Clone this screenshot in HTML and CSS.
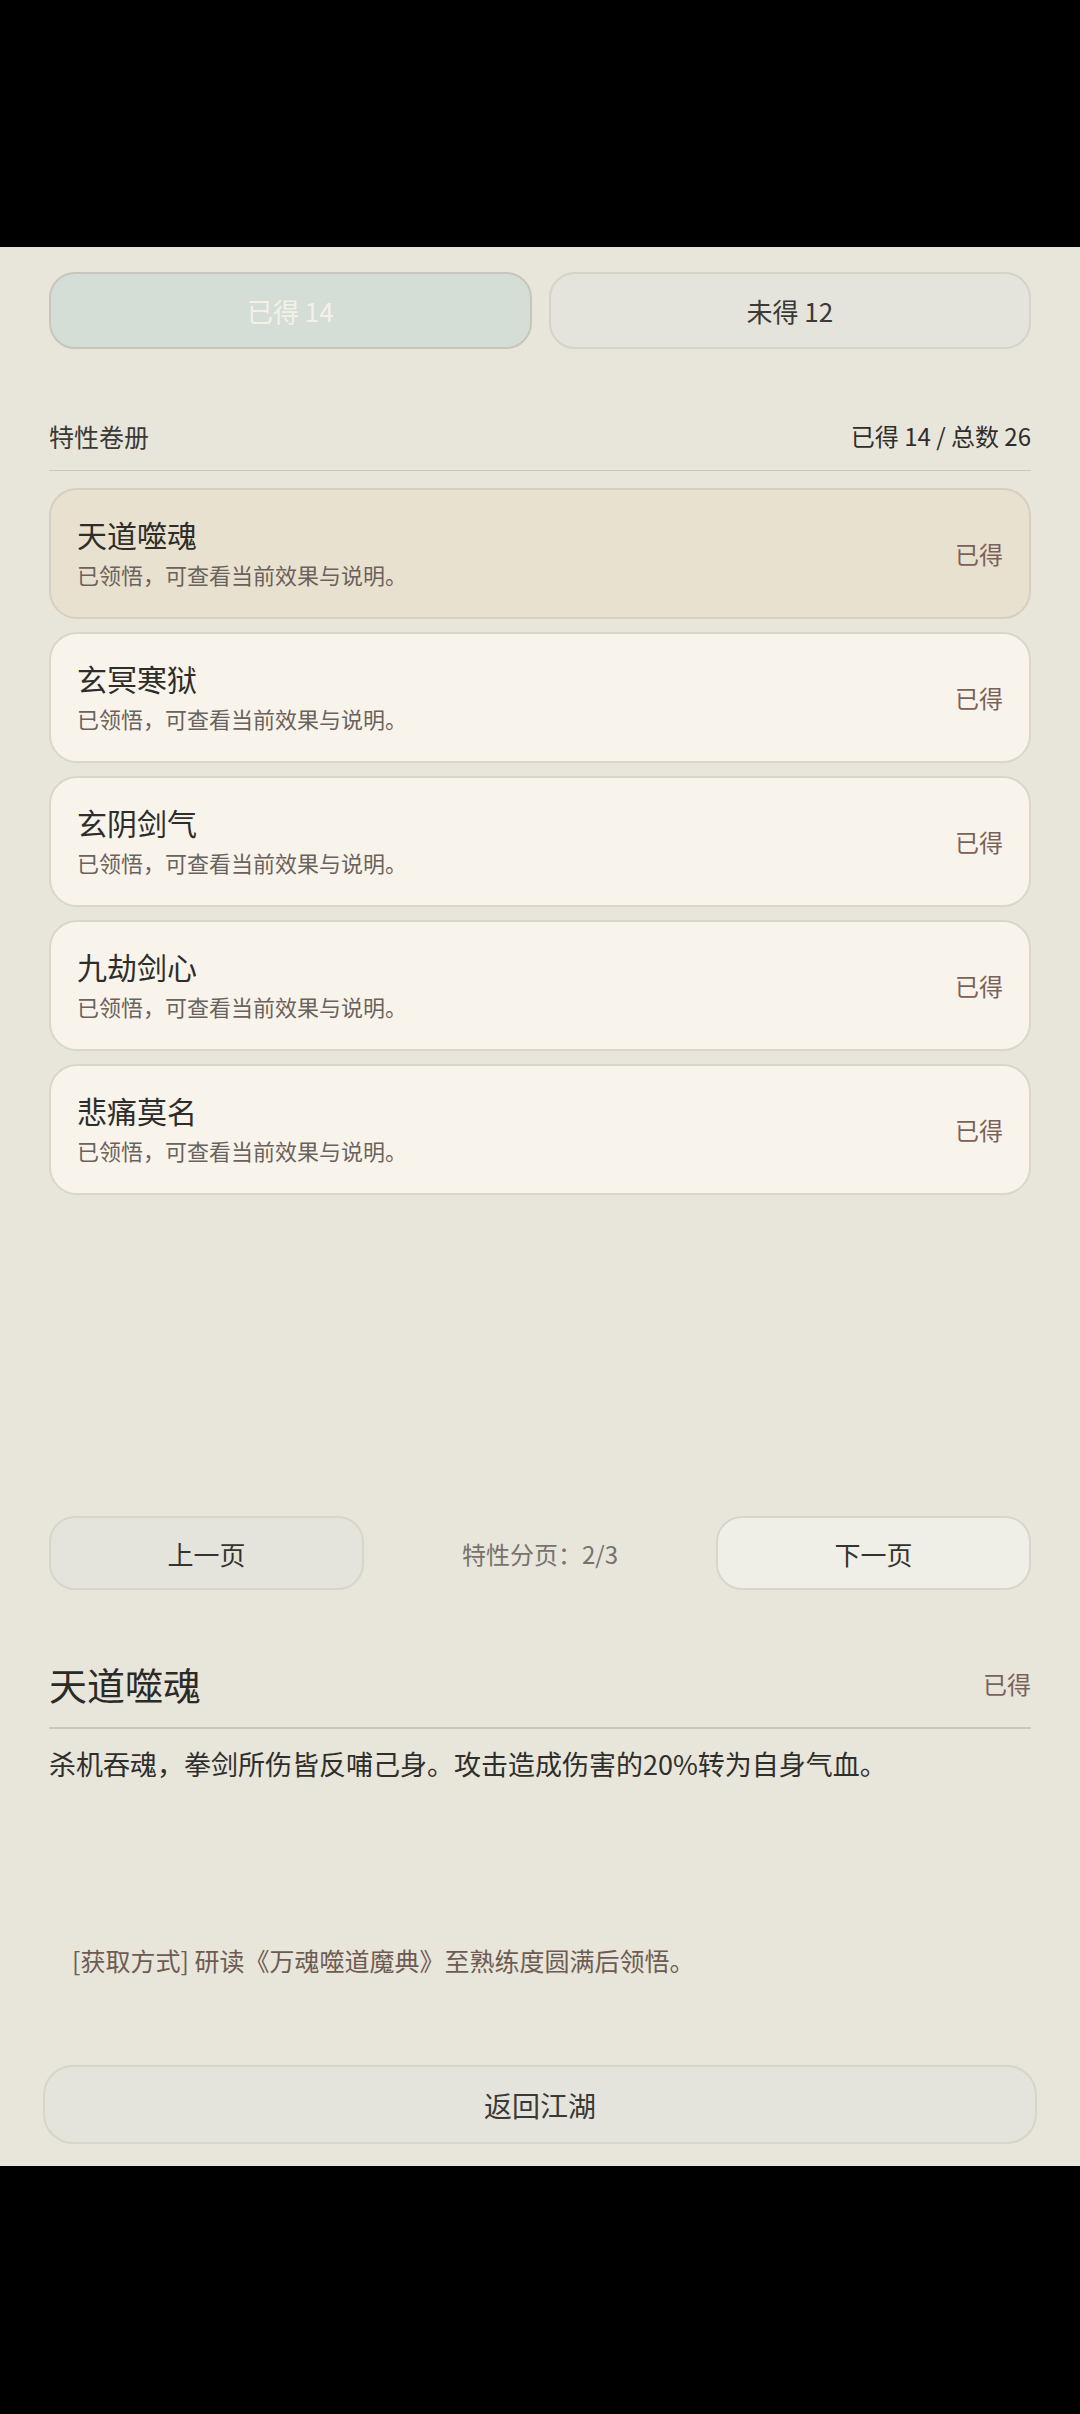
FILE: index.html
```html
<!DOCTYPE html>
<html lang="zh-CN">
    <head>
        <meta charset="UTF-8">
        <meta name="viewport" content="width=device-width, initial-scale=1.0">
        <title>特性卷册</title>
        <link rel="stylesheet" href="styles.css">
    </head>
    <body>
        <div class="screen">
            <div class="tabs">
                <button class="tab active">已得 14</button>
                <button class="tab">未得 12</button>
            </div>

            <div class="list-head">
                <span class="list-title">特性卷册</span>
                <span class="list-count">已得 14 / 总数 26</span>
            </div>

            <div class="list">
                <div class="card selected">
                    <div class="card-text">
                        <div class="card-name">天道噬魂</div>
                        <div class="card-desc">已领悟，可查看当前效果与说明。</div>
                    </div>
                    <span class="card-state">已得</span>
                </div>
                <div class="card">
                    <div class="card-text">
                        <div class="card-name">玄冥寒狱</div>
                        <div class="card-desc">已领悟，可查看当前效果与说明。</div>
                    </div>
                    <span class="card-state">已得</span>
                </div>
                <div class="card">
                    <div class="card-text">
                        <div class="card-name">玄阴剑气</div>
                        <div class="card-desc">已领悟，可查看当前效果与说明。</div>
                    </div>
                    <span class="card-state">已得</span>
                </div>
                <div class="card">
                    <div class="card-text">
                        <div class="card-name">九劫剑心</div>
                        <div class="card-desc">已领悟，可查看当前效果与说明。</div>
                    </div>
                    <span class="card-state">已得</span>
                </div>
                <div class="card">
                    <div class="card-text">
                        <div class="card-name">悲痛莫名</div>
                        <div class="card-desc">已领悟，可查看当前效果与说明。</div>
                    </div>
                    <span class="card-state">已得</span>
                </div>
            </div>

            <div class="pager">
                <button class="pager-btn prev">上一页</button>
                <span class="pager-info">特性分页：2/3</span>
                <button class="pager-btn next">下一页</button>
            </div>

            <div class="detail">
                <div class="detail-head">
                    <span class="detail-name">天道噬魂</span>
                    <span class="detail-state">已得</span>
                </div>
                <p class="detail-desc">杀机吞魂，拳剑所伤皆反哺己身。攻击造成伤害的20%转为自身气血。</p>
                <p class="detail-source">[获取方式] 研读《万魂噬道魔典》至熟练度圆满后领悟。</p>
            </div>

            <button class="back-btn">返回江湖</button>
        </div>
    </body>
</html>
```

FILE: styles.css
```css
html, body {
    margin: 0;
    background: #000;
}
body {
    font-family: "Noto Sans CJK SC", "Noto Sans", sans-serif;
    color: #333;
}
button {
    font-family: inherit;
    cursor: pointer;
}
.screen {
    margin-top: 247px;
    height: 1919px;
    box-sizing: border-box;
    background: #e8e5db;
    padding: 25px 49px 0 49px;
    display: flex;
    flex-direction: column;
}

/* tabs */
.tabs {
    display: grid;
    grid-template-columns: 1fr 1fr;
    gap: 17px;
}
.tab {
    height: 77px;
    border-radius: 26px;
    border: solid 2px #d6d3c8;
    background: #e4e3dc;
    color: #3b3a36;
    font-size: 26px;
}
.tab.active {
    background: #d5ded6;
    border-color: #c6c6ba;
    color: #f4f1e8;
}

/* list header */
.list-head {
    display: flex;
    justify-content: space-between;
    align-items: center;
    margin-top: 69px;
    padding-bottom: 16px;
    line-height: 36px;
    border-bottom: solid 1px #cdc9bd;
}
.list-title {
    font-size: 25px;
    color: #3a3935;
}
.list-count {
    font-size: 24px;
    color: #2f2e2b;
}

/* cards */
.list {
    display: flex;
    flex-direction: column;
    gap: 13px;
    margin-top: 17px;
}
.card {
    height: 131px;
    box-sizing: border-box;
    display: flex;
    align-items: center;
    justify-content: space-between;
    padding: 0 26px 0 26px;
    border: solid 2px #dcd6c9;
    border-radius: 28px;
    background: #f8f4ec;
}
.card.selected {
    background: #e9e1cf;
    border-color: #d6cfbf;
}
.card-text {
    margin-top: -4px;
}
.card-name {
    font-size: 30px;
    line-height: 38px;
    color: #2e2d2a;
}
.card-desc {
    margin-top: 6px;
    font-size: 22px;
    line-height: 30px;
    color: #6a625c;
}
.card-state {
    font-size: 24px;
    color: #7a625a;
}

/* pager */
.pager {
    display: grid;
    grid-template-columns: 315px 1fr 315px;
    align-items: center;
    margin-top: auto;
    margin-bottom: 70px;
}
.pager-btn {
    height: 74px;
    border-radius: 26px;
    border: solid 2px #d8d5c9;
    background: #e4e4dd;
    color: #34332f;
    font-size: 26px;
}
.pager-btn.next {
    background: #efeee7;
}
.pager-info {
    text-align: center;
    font-size: 24px;
    color: #77736c;
}

/* detail */
.detail-head {
    display: flex;
    justify-content: space-between;
    align-items: center;
    line-height: 48px;
    padding-bottom: 19px;
    border-bottom: solid 2px #cac6b9;
}
.detail-name {
    font-size: 38px;
    color: #2b2a27;
}
.detail-state {
    font-size: 24px;
    color: #7a625a;
}
.detail-desc {
    margin: 15px 0 0 0;
    font-size: 27px;
    line-height: 40px;
    color: #2f2e2b;
}
.detail-source {
    margin: 158px 0 0 0;
    padding-left: 23px;
    font-size: 25px;
    line-height: 36px;
    color: #6e5c53;
}

.back-btn {
    margin: 87px -6px 22px -6px;
    height: 79px;
    border-radius: 30px;
    border: solid 2px #d8d5c9;
    background: #e4e3dc;
    color: #3a3935;
    font-size: 28px;
}
```
